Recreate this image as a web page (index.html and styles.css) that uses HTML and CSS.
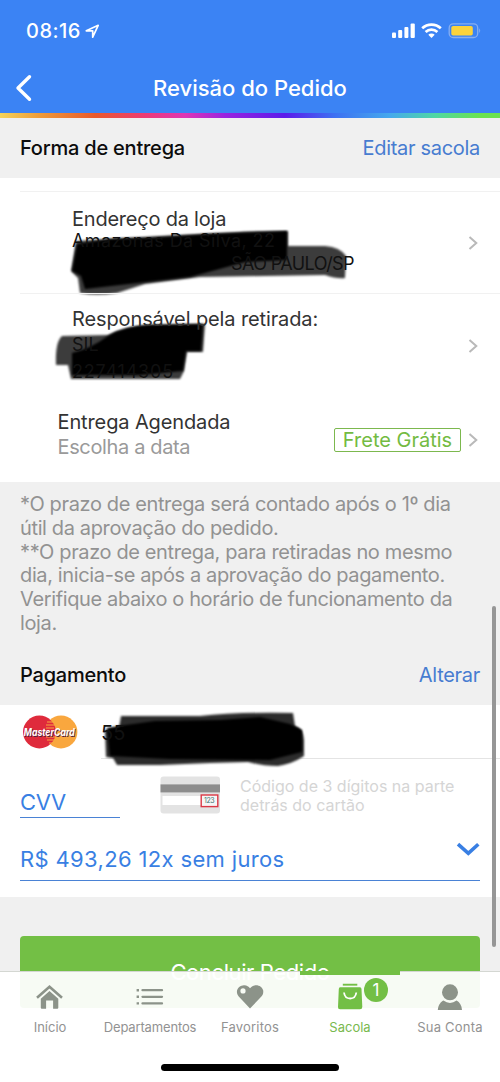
FILE: index.html
```html
<!DOCTYPE html>
<html lang="pt-BR">
<head>
<meta charset="utf-8">
<meta name="viewport" content="width=device-width">
<title>Revisão do Pedido</title>
<link rel="stylesheet" href="styles.css">
</head>
<body>
<div class="app">
  <header class="header">
    <div class="status">
      <div class="status-left"><span class="time">08:16</span>
        <svg class="loc" width="15" height="15" viewBox="0 0 15 15"><path d="M1.3 6.8 13.2 1.3 7.7 13.2V6.8Z" fill="none" stroke="#fff" stroke-width="1.7" stroke-linejoin="round"/></svg>
      </div>
      <svg width="90" height="18" viewBox="0 0 90 18">
        <g fill="#fff"><rect x="0" y="10.5" width="4" height="5.5" rx="1"/><rect x="6.2" y="8" width="4" height="8" rx="1"/><rect x="12.4" y="5" width="4" height="11" rx="1"/><rect x="18.6" y="1.5" width="4.2" height="14.5" rx="1"/></g>
        <g fill="none" stroke="#fff" stroke-width="2.7"><path d="M30.2 6.3a13.5 13.5 0 0 1 18.6 0"/><path d="M33.6 10a8.7 8.7 0 0 1 11.8 0"/></g>
        <path d="M36.3 12.7a4.6 4.6 0 0 1 6.4 0L39.5 16Z" fill="#fff"/>
        <rect x="57.2" y="1.9" width="28.5" height="13.6" rx="4" fill="none" stroke="#87aef0" stroke-width="1.3"/>
        <rect x="59.3" y="4" width="21.5" height="9.5" rx="1.8" fill="#fbd33c"/>
        <path d="M87.2 6.3q2 2.3 0 4.8Z" fill="#87aef0"/>
      </svg>
    </div>
    <div class="nav">
      <svg class="back" width="18" height="28" viewBox="0 0 18 28"><path d="M14.5 2.7 3 14l11.5 11.2" fill="none" stroke="#fff" stroke-width="3.4" stroke-linecap="round" stroke-linejoin="round"/></svg>
      <h1>Revisão do Pedido</h1>
    </div>
    <div class="rainbow"></div>
  </header>

  <main class="content">
    <section class="section-head"><h2>Forma de entrega</h2><a>Editar sacola</a></section>
    <section class="delivery">
      <div class="row address">
        <svg class="scribble" width="310" height="90" viewBox="50 220 310 90">
          <path class="soft" d="M76 241 160 236 240 232Q248 231 288 231V246H325Q340 247 346 256L345 278Q337 279 325 275L200 277 145 284 117 293Q96 296 80 293L78 278 71 271Z" fill="#3c3c3c"/>
          <path class="soft" d="M77 244 110 239 150 238 210 234 287 231V260L245 262 190 277 120 285 85 289 81 276 72 271Z"/>
        </svg>
        <div class="lines"><p class="place">Endereço da loja</p><p class="small street">Amazonas Da Silva, 22</p><p class="small city">SÃO PAULO/SP</p></div>
        <svg class="chev" width="10" height="16" viewBox="0 0 10 16"><path d="m1.5 2 6.8 6-6.8 6"/></svg>
      </div>
      <div class="row pickup">
        <svg class="scribble" width="170" height="75" viewBox="50 315 170 75">
          <path class="soft" d="M62 336 108 335Q125 326 150 325L205 324 203 352H187L184 371 180 379H71L68 365 56 365Q55 342 62 336Z" fill="#3c3c3c"/>
          <path class="soft" d="M108 336Q125 326 150 325L203 324 201 351H186L183 371 140 375H72L72 353Q90 349 108 336Z"/>
        </svg>
        <div class="lines"><p class="who">Responsável pela retirada:</p><p class="small">SIL</p><p class="small doc">227414305</p></div>
        <svg class="chev" width="10" height="16" viewBox="0 0 10 16"><path d="m1.5 2 6.8 6-6.8 6"/></svg>
      </div>
      <div class="row schedule">
        <div class="lines"><p class="who">Entrega Agendada</p><p class="muted">Escolha a data</p></div>
        <span class="free">Frete Grátis</span>
        <svg class="chev" width="10" height="16" viewBox="0 0 10 16"><path d="m1.5 2 6.8 6-6.8 6"/></svg>
      </div>
    </section>
    <p class="note">*O prazo de entrega será contado após o 1º dia<br>útil da aprovação do pedido.<br>**O prazo de entrega, para retiradas no mesmo<br>dia, inicia-se após a aprovação do pagamento.<br>Verifique abaixo o horário de funcionamento da<br>loja.</p>
    <section class="section-head"><h2>Pagamento</h2><a>Alterar</a></section>
    <section class="payment">
      <div class="card-row">
        <svg class="brand" width="58" height="36" viewBox="0 0 58 36">
          <circle cx="39" cy="18" r="16.4" fill="#f9a73e"/><circle cx="17.4" cy="18" r="16.4" fill="#df2b3c"/>
          <path d="M25 8h7M24 11h9M24 14h8M24 23h9M25 26h8M27 29h5" stroke="#f9a73e" stroke-width="1.1"/>
          <text x="2.6" y="22.6" textLength="51" lengthAdjust="spacingAndGlyphs" class="mc shadow">MasterCard</text>
          <text x="1.8" y="21.9" textLength="51" lengthAdjust="spacingAndGlyphs" class="mc">MasterCard</text>
        </svg>
        <svg class="scribble" width="220" height="65" viewBox="95 705 220 65">
          <path class="soft" d="M121 716H200Q235 712 293 713L295 726Q303 728 304 740L304 756Q292 764 278 766 264 766 248 762L210 763 160 765H117L113 758 106 757 105 730 119 728Z" fill="#2c2c2c"/>
          <path class="soft" d="M119 726 155 721 220 720 260 717 290 724 302 730V752L270 760 170 759 110 756 107 728Z"/>
        </svg>
        <div class="number">55</div>
      </div>
      <div class="cvv-row">
        <div class="cvv">CVV</div>
        <svg class="cvv-card" width="60" height="38" viewBox="0 0 60 38"><rect x=".5" y=".5" width="59.5" height="37" rx="3" fill="#e3e3e3"/><rect x=".5" y="8.4" width="59.5" height="8" fill="#8d8d8d"/><rect x="2.5" y="20" width="42" height="9" fill="#fff"/><rect x="41.2" y="19" width="16.6" height="11.6" fill="#f6f6f6" stroke="#da3845" stroke-width="1.4"/><text x="44" y="27.4" class="code">123</text></svg>
        <p class="hint">Código de 3 dígitos na parte<br>detrás do cartão</p>
      </div>
      <div class="installments"><span>R$ 493,26 12x sem juros</span><svg width="24" height="20" viewBox="0 0 24 20"><path d="m2 5.2 10.3 9.2 10-9.2" fill="none" stroke="#397fe3" stroke-width="3.6"/></svg></div>
    </section>
    <div class="action"><button>Concluir Pedido</button></div>
  </main>

  <div class="scrollbar"></div>
  <nav class="tabs">
    <a><svg width="30" height="30" viewBox="0 0 30 30"><g transform="translate(-.5 3.2)"><path d="m2.5 13.5 12.5-11 12.5 11" fill="none" stroke="#8c9389" stroke-width="2.6"/><path d="M15 6.8 23.8 14.6V23.5Q23.8 24.5 22.8 24.5H18.6V16.3H11.6v8.2H7.3Q6.3 24.5 6.3 23.5V14.6Z" fill="#8c9389"/></g></svg><span>Início</span></a>
    <a><svg width="30" height="30" viewBox="0 0 30 30"><path d="M7.5 9.2H27M7.5 15.8H27M7.5 22.4H27" stroke="#8c9389" stroke-width="2.3" stroke-linecap="round"/><path d="M1.6 9.2H4M1.6 15.8H4M1.6 22.4H4" stroke="#8c9389" stroke-width="2.4"/></svg><span class="tight">Departamentos</span></a>
    <a><svg width="30" height="30" viewBox="0 0 30 30"><path fill-rule="evenodd" d="M15 27.5 3.5 15.3C-1 9 5 3.9 9.3 4.2 12 4.4 13.6 5.5 15 7.2 19.5 1.7 27.2 4.3 28.2 9.5 28.5 12.3 27.8 14 26.4 15.4ZM8 7.3a2.6 2.6 0 1 0 0 5.2 2.6 2.6 0 0 0 0-5.2Z" fill="#8c9389"/></svg><span class="wide">Favoritos</span></a>
    <a class="active"><svg width="30" height="30" viewBox="0 0 30 30"><path d="M7.8 3.7H22.3" stroke="#73bf45" stroke-width="1.9"/><path d="M5 6.2H25Q26.3 6.2 26.5 8L27.3 26Q27.3 28.3 25 28.3H5Q2.8 28.3 3 26L3.8 8Q4 6.2 5 6.2Z" fill="#73bf45"/><path d="M9 11.5c1 8 11.3 8 12.3 0" fill="none" stroke="#fff" stroke-width="1.8"/></svg><span>Sacola</span><b class="badge">1</b></a>
    <a><svg width="30" height="30" viewBox="0 0 30 30"><path d="M2.8 29C3.4 23.6 6 20.8 8.4 19.6Q15 24.4 21.6 19.6C24.7 21.3 26.7 24.7 27 29Z" fill="#8c9389"/><circle cx="15" cy="11.3" r="8" fill="#8c9389"/></svg><span class="wide">Sua Conta</span></a>
    <div class="home-bar"></div>
  </nav>
</div>
</body>
</html>
```
FILE: styles.css
```css
* { box-sizing: border-box; }
body { margin: 0; font-family: Inter, Roboto, sans-serif; font-size: 20px; color: #333; background: #f0f0f0; }
h1, h2, p { margin: 0; font-size: inherit; font-weight: inherit; }
.app { position: relative; width: 500px; height: 1082px; overflow: hidden; }
.header { height: 118px; background: #3b83f4; color: #fff; }
.status { height: 62px; padding: 0 18px 0 26px; display: flex; justify-content: space-between; align-items: center; }
.status-left { display: flex; align-items: center; gap: 4px; height: 24px; }
.time { font-size: 20px; font-weight: 500; letter-spacing: .5px; }
.nav { height: 51px; padding-left: 15px; display: grid; grid-template-columns: 18px 1fr 33px; align-items: center; }
.nav h1 { font-size: 22px; font-weight: 500; text-align: center; }
.rainbow { height: 5px; background: linear-gradient(90deg, #f4d35a 0%, #ee9b38 8%, #e8592b 19%, #ed3b75 29%, #de36b5 37%, #9a24df 45%, #5b1bea 57%, #3d71f2 67%, #45a9ed 78%, #4fd7a4 87%, #6be34e 96%); }
.section-head { height: 60px; padding: 0 20px; display: flex; align-items: center; justify-content: space-between; background: #f0f0f0; }
.section-head h2 { color: #0c0c0c; font-weight: 500; letter-spacing: -.22px; }
.section-head a { color: #477cd0; letter-spacing: -.3px; }
.delivery { height: 304px; padding-top: 13px; background: #fff; }
.row { position: relative; margin-left: 20px; padding-right: 22px; display: flex; align-items: center; }
.lines { flex: 1; position: relative; }
.address { height: 102px; padding-left: 52px; border-top: 1px solid #f1f1f1; }
.address .lines p { line-height: 22.6px; white-space: nowrap; }
.address .lines { padding-bottom: 2px; }
.place { letter-spacing: -.22px; }
.who { letter-spacing: -.12px; }
.pickup { height: 104px; padding-left: 52px; border-top: 1px solid #f1f1f1; }
.pickup .lines p { line-height: 26.5px; }
.schedule { height: 85px; padding-left: 37.5px; }
.schedule .lines { padding-bottom: 9px; }
.schedule .lines p { line-height: 25px; }
.small { font-size: 18px; color: #111; }
.street { letter-spacing: .4px; }
.city { padding-left: 159px; letter-spacing: -.6px; }
.lines .doc { letter-spacing: .8px; }
.muted { color: #9a9a9a; letter-spacing: -.36px; }
.chev { fill: none; stroke: #b9b9b9; stroke-width: 2; }
.free { margin-right: 7px; width: 127px; height: 24px; border: 1.5px solid #7cb84e; border-radius: 2px; color: #73bb42; line-height: 22px; text-align: center; }
.scribble { position: absolute; }
.address .scribble { left: 30px; top: 28px; }
.pickup .scribble { left: 30px; top: 21px; }
.soft { filter: blur(1.3px); }
.note { height: 163px; padding: 11px 20px 0; color: #929292; line-height: 23.8px; letter-spacing: -.37px; white-space: nowrap; }
.payment { height: 192px; background: #fff; padding: 0 20px; }
.card-row { position: relative; height: 54px; padding-left: 2px; display: flex; align-items: center; }
.card-row > .number { position: relative; margin-left: 21px; margin-right: -20px; height: 54px; flex: 1; line-height: 57px; color: #111; }
.card-row::after { content: ""; position: absolute; left: 81px; right: -20px; bottom: 0; height: 1px; background: #e4e4e4; z-index: 0; }
.card-row .scribble { left: 75px; top: 0; z-index: 1; }
.card-row > .number { z-index: 2; }
.mc { font: italic 700 10.5px Inter, sans-serif; fill: #fff; }
.mc.shadow { fill: #51203b; }
.cvv-row { display: flex; height: 80px; }
.cvv { width: 100px; height: 59px; margin-right: 40px; padding-top: 30px; line-height: 27px; font-size: 22px; letter-spacing: -.3px; color: #397fe3; border-bottom: 1.5px solid #4a82d5; }
.cvv-card { margin-top: 17px; }
.code { font: 7px Inter, sans-serif; fill: #3f7474; letter-spacing: -.4px; }
.hint { margin: 18px 0 0 20px; font-size: 16px; line-height: 18.5px; color: #d5d5d5; white-space: nowrap; }
.installments { height: 42px; border-bottom: 1.5px solid #4a82d5; display: flex; justify-content: space-between; color: #397fe3; font-size: 22px; letter-spacing: .35px; line-height: 41px; }
.action { padding: 39px 20px 0; }
.action button { display: block; width: 100%; height: 72px; border: 0; border-radius: 4px; background: #73bf45; color: #fff; font: 400 22px Inter, sans-serif; letter-spacing: -.4px; }
.scrollbar { position: absolute; right: 4px; top: 606px; width: 4px; height: 341px; border-radius: 2px; background: #969696; }
.tabs { position: absolute; left: 0; right: 0; bottom: 0; height: 111px; display: grid; grid-template-columns: repeat(5, 1fr); border-top: 1px solid #d4d7d2; background: rgba(255,255,255,.94); }
.tabs a { position: relative; height: 80px; padding-top: 9px; display: flex; flex-direction: column; align-items: center; font-size: 13px; line-height: 20px; color: #929292; white-space: nowrap; }
.tabs a span { margin-top: 6px; }
.tabs .tight { letter-spacing: -.15px; }
.tabs .wide { letter-spacing: .2px; }
.tabs .active { color: #79b94e; }
.tabs .active::before { content: ""; position: absolute; top: -1px; left: 0; width: 100%; height: 4px; background: #73bf45; }
.badge { position: absolute; left: 64px; top: 6px; width: 24px; height: 24px; border-radius: 50%; background: #73bf45; color: #fff; font-size: 17px; font-weight: 400; line-height: 24px; text-align: center; }
.home-bar { position: absolute; left: 161px; bottom: 11px; width: 178px; height: 7px; border-radius: 4px; background: #000; }
```
